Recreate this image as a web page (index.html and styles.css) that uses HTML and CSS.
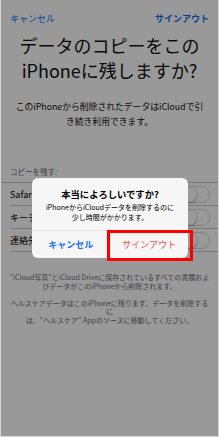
FILE: index.html
```html
<!DOCTYPE html>
<html lang="ja">
<head>
<meta charset="utf-8">
<link rel="stylesheet" href="styles.css">
</head>
<body>
<div class="screen">
  <div class="page">
    <div class="nav">
      <span class="nav-cancel">キャンセル</span>
      <span class="nav-signout">サインアウト</span>
    </div>
    <h1 class="title">データのコピーをこの<br>iPhoneに残しますか?</h1>
    <p class="lead">このiPhoneから削除されたデータはiCloudで引<br>き続き利用できます。</p>
    <div class="section-label">コピーを残す:</div>
    <ul class="list">
      <li class="row"><span>Safari</span><span class="toggle"><span class="knob"></span></span></li>
      <li class="row"><span>キーチェーン</span><span class="toggle"><span class="knob"></span></span></li>
      <li class="row"><span>連絡先</span><span class="toggle"><span class="knob"></span></span></li>
    </ul>
    <div class="foot">
      <p>“iCloud写真”とiCloud Driveに保存されているすべての書類およ<br>びデータがこのiPhoneから削除されます。</p>
      <p>ヘルスケアデータはこのiPhoneに残ります。データを削除するに<br>は、“ヘルスケア” Appのソースに移動してください。</p>
    </div>
  </div>
  <div class="dim"></div>
  <div class="alert">
    <div class="alert-body">
      <div class="alert-title">本当によろしいですか?</div>
      <div class="alert-msg">iPhoneからiCloudデータを削除するのに<br>少し時間がかかります。</div>
    </div>
    <div class="alert-actions">
      <span class="btn btn-cancel">キャンセル</span>
      <span class="btn btn-destructive">サインアウト</span>
    </div>
  </div>
  <div class="highlight"></div>
</div>
</body>
</html>
```
FILE: styles.css
```css
html, body {
  margin: 0;
  padding: 0;
  background: #ffffff;
}
body {
  font-family: "Noto Sans CJK JP", "Noto Sans", sans-serif;
}
.screen {
  position: relative;
  width: 219px;
  height: 437px;
  box-sizing: border-box;
  border-left: 1px solid #d6d6d6;
  border-right: 1px solid #d6d6d6;
  border-bottom: 1px solid #d6d6d6;
  overflow: hidden;
  background: #ffffff;
}
.page {
  display: flex;
  flex-direction: column;
  color: #000;
}
.nav {
  display: flex;
  justify-content: space-between;
  padding: 13px 9px 0 9px;
  font-size: 9px;
  line-height: 12px;
  color: #0a6ef0;
}
.nav-signout {
  font-weight: 700;
}
.title {
  margin: 8px 0 0 0;
  font-size: 18px;
  line-height: 25px;
  font-weight: 400;
  text-align: center;
  color: #111;
}
.lead {
  margin: 16px 0 0 0;
  font-size: 8.8px;
  line-height: 15px;
  text-align: center;
  color: #111;
}
.section-label {
  margin-top: 38px;
  padding: 0 9px 5px 9px;
  font-size: 7.5px;
  line-height: 10px;
  color: #6d6d72;
}
.list {
  list-style: none;
  margin: 0;
  padding: 0 0 0 9px;
  border-top: 1px solid #c8c8cc;
}
.row {
  display: flex;
  align-items: center;
  justify-content: space-between;
  height: 22px;
  padding-right: 8px;
  border-bottom: 1px solid #c8c8cc;
  font-size: 9px;
}
.toggle {
  width: 29px;
  height: 17px;
  box-sizing: border-box;
  border: 1px solid #d6d6d6;
  border-radius: 9px;
  background: #fff;
  display: flex;
  align-items: center;
}
.knob {
  width: 15px;
  height: 15px;
  border-radius: 50%;
  background: #fff;
  box-shadow: 0 1px 2px rgba(0, 0, 0, 0.3), 0 0 0 0.5px rgba(0, 0, 0, 0.1);
}
.foot {
  margin-top: 21px;
  padding: 0 8px;
  font-size: 7px;
  line-height: 8.5px;
  text-align: center;
  color: #6d6d72;
}
.foot p {
  margin: 0 0 8.5px 0;
}
.dim {
  position: absolute;
  inset: 0;
  background: rgba(0, 0, 0, 0.4);
}
.alert {
  position: absolute;
  left: 31px;
  top: 178px;
  width: 156px;
  height: 80px;
  background: #f6f6f6;
  border-radius: 6px;
  display: flex;
  flex-direction: column;
  overflow: hidden;
}
.alert-body {
  flex: 1;
  display: flex;
  flex-direction: column;
  align-items: center;
  padding-top: 10px;
}
.alert-title {
  font-size: 9.3px;
  line-height: 13px;
  font-weight: 700;
  color: #000;
}
.alert-msg {
  margin-top: 1px;
  font-size: 7px;
  line-height: 10px;
  text-align: center;
  color: #000;
}
.alert-actions {
  display: flex;
  height: 27px;
  border-top: 1px solid #e2e2e2;
}
.btn {
  flex: 1;
  display: flex;
  align-items: center;
  justify-content: center;
  font-size: 9px;
}
.btn-cancel {
  color: #1a6ff5;
  font-weight: 700;
  border-right: 1px solid #e2e2e2;
}
.btn-destructive {
  color: #f05050;
}
.highlight {
  position: absolute;
  left: 106px;
  top: 230px;
  width: 86px;
  height: 31px;
  box-sizing: border-box;
  border: 3px solid #ff0000;
}
```
